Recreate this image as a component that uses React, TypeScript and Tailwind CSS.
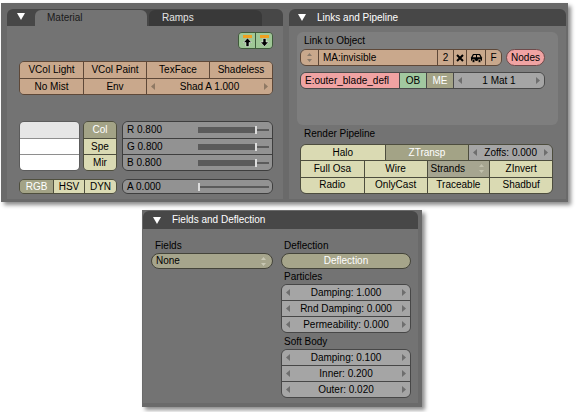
import React from "react";

// Blender 2.4x style button panels: Material, Links and Pipeline, Fields and Deflection

type Tone = "tan" | "cream" | "olive" | "gray" | "pink" | "green" | "menu";

const tones: Record<Tone, string> = {
  tan: "bg-[#c9a88c] text-black",
  cream: "bg-[#dadab3] text-black",
  olive: "bg-[#a3a386] text-white",
  gray: "bg-[#a5a5a5] text-black",
  pink: "bg-[#f0a3a3] text-black",
  green: "bg-[#a2c8a0] text-black",
  menu: "bg-[#a6a590] text-black",
};

function Tri() {
  return (
    <svg width="8" height="7" viewBox="0 0 8 7">
      <path d="M0 0H8L4 7Z" fill="#ffffff" />
    </svg>
  );
}

function Arrow({ dir, color = "#6e6e6e" }: { dir: "l" | "r"; color?: string }) {
  return (
    <svg width="4" height="7" viewBox="0 0 4 7" className="flex-none">
      <path d={dir === "l" ? "M4 0L0 3.5L4 7Z" : "M0 0L4 3.5L0 7Z"} fill={color} />
    </svg>
  );
}

function Stepper({ color = "#8a7a6a" }: { color?: string }) {
  return (
    <svg width="5" height="9" viewBox="0 0 5 9" className="flex-none">
      <path d="M2.5 0L5 3H0Z M0 6H5L2.5 9Z" fill={color} />
    </svg>
  );
}

function Cell({
  tone,
  className = "",
  children,
}: {
  tone: Tone;
  className?: string;
  children?: React.ReactNode;
}) {
  return (
    <div className={`flex items-center justify-center h-full whitespace-nowrap ${tones[tone]} ${className}`}>
      {children}
    </div>
  );
}

function Num({
  tone,
  label,
  className = "",
  arrow,
}: {
  tone: Tone;
  label: string;
  className?: string;
  arrow?: string;
}) {
  return (
    <div className={`flex items-center h-full px-[4px] whitespace-nowrap ${tones[tone]} ${className}`}>
      <Arrow dir="l" color={arrow} />
      <span className="flex-1 text-center">{label}</span>
      <Arrow dir="r" color={arrow} />
    </div>
  );
}

function Slider({ label, fill, className = "" }: { label: string; fill: number; className?: string }) {
  return (
    <div className={`flex items-center h-full bg-[#929292] ${className}`}>
      <span className="w-[75px] flex-none pl-[4px] text-black">{label}</span>
      <div className="w-[71px] flex items-center h-full">
        <div className="h-[6px] bg-[#5b5b5b]" style={{ width: fill }} />
        <div className="w-[2px] h-[8px] bg-[#dcdcdc]" />
        <div className="flex-1 h-[2px] bg-[#5b5b5b]" />
      </div>
    </div>
  );
}

function MoveIcon({ up }: { up: boolean }) {
  return (
    <svg width="9" height="12" viewBox="0 0 9 12">
      <rect x="0" y="0" width="9" height="3" fill="#f0a020" />
      <path
        d={up ? "M4.5 3L8.5 7.5H6V11.5H3V7.5H0.5Z" : "M3 3.5H6V7H8.5L4.5 11.5L0.5 7H3Z"}
        fill="#000000"
        stroke="#ffffff"
        strokeWidth="0.5"
      />
    </svg>
  );
}

function CarIcon() {
  return (
    <svg width="13" height="10" viewBox="0 0 13 10">
      <path d="M1 4.5L3 1H10L12 4.5V8H1Z" fill="#000000" />
      <path d="M3.8 2H6V4.2H2.6Z M7 2H9.2L10.4 4.2H7Z" fill="#c9a88c" />
      <circle cx="3.5" cy="8" r="1.6" fill="#000000" stroke="#c9a88c" strokeWidth="0.8" />
      <circle cx="9.5" cy="8" r="1.6" fill="#000000" stroke="#c9a88c" strokeWidth="0.8" />
    </svg>
  );
}

function Label({ children, className = "" }: { children: React.ReactNode; className?: string }) {
  return <div className={`h-[12px] leading-[12px] text-black whitespace-nowrap ${className}`}>{children}</div>;
}

export default function App() {
  return (
    <div className="w-[581px] h-[412px] bg-white overflow-hidden font-['Liberation_Sans',Arial,sans-serif] text-[10px] leading-none">
      {/* top window */}
      <div className="ml-[1px] mt-[3px] w-[567px] h-[199px] bg-[#6a6a6a] flex gap-[6px] pl-[6px] pt-[6px] shadow-[3px_3px_4px_rgba(0,0,0,0.45)]">
        {/* Material panel */}
        <div className="w-[276px] h-[190px] flex flex-col">
          <div className="h-[17px] bg-[#474747] rounded-t-[6px] flex items-end">
            <div className="self-center ml-[10px] mb-[2px] flex">
              <Tri />
            </div>
            <div className="ml-[10px] w-[112px] h-[16px] rounded-t-[6px] bg-[#737373] pl-[12px] flex items-center text-[#1a1a1a]">
              Material
            </div>
            <div className="ml-[2px] w-[113px] h-[16px] rounded-t-[6px] bg-[#393939] pl-[13px] flex items-center text-[#e4e4e4]">
              Ramps
            </div>
          </div>
          <div className="flex-1 bg-[#737373] flex flex-col pl-[12px] pr-[10px] pt-[6px]">
            <div className="self-end w-[35px] h-[17px] flex rounded-[4px] border border-[#3f5a3a] overflow-hidden">
              <div className="flex-1 bg-[#9fc796] flex items-center justify-center">
                <MoveIcon up />
              </div>
              <div className="flex-1 bg-[#9fc796] border-l border-[#3f5a3a] flex items-center justify-center">
                <MoveIcon up={false} />
              </div>
            </div>

            <div className="mt-[12px] w-[254px] h-[34px] rounded-[5px] border border-[#5e4838] overflow-hidden grid grid-cols-4 grid-rows-2">
              <Cell tone="tan">VCol Light</Cell>
              <Cell tone="tan" className="border-l border-[#5e4838]">VCol Paint</Cell>
              <Cell tone="tan" className="border-l border-[#5e4838]">TexFace</Cell>
              <Cell tone="tan" className="border-l border-[#5e4838]">Shadeless</Cell>
              <Cell tone="tan" className="border-t border-[#5e4838]">No Mist</Cell>
              <Cell tone="tan" className="border-t border-l border-[#5e4838]">Env</Cell>
              <Num tone="tan" label="Shad A 1.000" arrow="#8f7964" className="col-span-2 border-t border-l border-[#5e4838]" />
            </div>

            <div className="mt-[26px] h-[50px] flex">
              <div className="w-[61px] h-full rounded-[5px] border border-[#5c5c5c] overflow-hidden grid grid-rows-3">
                <div className="bg-[#e6e6e6]" />
                <div className="bg-white border-t border-[#8e8e8e]" />
                <div className="bg-white border-t border-[#8e8e8e]" />
              </div>
              <div className="ml-[3px] w-[34px] h-full rounded-[5px] border border-[#4f4f3e] overflow-hidden grid grid-rows-3">
                <Cell tone="olive">Col</Cell>
                <Cell tone="cream" className="border-t border-[#4f4f3e]">Spe</Cell>
                <Cell tone="cream" className="border-t border-[#4f4f3e]">Mir</Cell>
              </div>
              <div className="ml-[5px] w-[151px] h-full rounded-[6px] border border-[#3e3e3e] overflow-hidden grid grid-rows-3">
                <Slider label="R 0.800" fill={57} />
                <Slider label="G 0.800" fill={57} className="border-t border-[#3e3e3e]" />
                <Slider label="B 0.800" fill={57} className="border-t border-[#3e3e3e]" />
              </div>
            </div>

            <div className="mt-[8px] h-[15px] flex">
              <div className="w-[98px] h-full rounded-[5px] border border-[#4f4f3e] overflow-hidden flex">
                <Cell tone="olive" className="w-[33px]">RGB</Cell>
                <Cell tone="cream" className="w-[31px] border-l border-[#4f4f3e]">HSV</Cell>
                <Cell tone="cream" className="flex-1 border-l border-[#4f4f3e]">DYN</Cell>
              </div>
              <div className="ml-[5px] w-[151px] h-full rounded-[6px] border border-[#3e3e3e] overflow-hidden">
                <Slider label="A 0.000" fill={0} />
              </div>
            </div>
          </div>
        </div>

        {/* Links and Pipeline panel */}
        <div className="w-[277px] h-[190px] flex flex-col">
          <div className="h-[17px] bg-[#474747] rounded-t-[6px] flex items-center pl-[9px]">
            <Tri />
            <span className="ml-[11px] text-white">Links and Pipeline</span>
          </div>
          <div className="flex-1 bg-[#737373] flex flex-col pt-[6px]">
            <div className="ml-[8px] w-[261px] h-[93px] rounded-[6px] bg-[#7e7e7e] pt-[3px] pl-[3px] flex flex-col">
              <Label className="pl-[4px]">Link to Object</Label>
              <div className="mt-[2px] h-[17px] flex gap-[4px]">
                <div className="w-[202px] h-full rounded-[6px] border border-[#5e4838] overflow-hidden flex">
                  <Cell tone="tan" className="w-[17px]">
                    <Stepper />
                  </Cell>
                  <Cell tone="tan" className="w-[119px] border-l border-[#5e4838] !justify-start pl-[4px]">
                    MA:invisible
                  </Cell>
                  <Cell tone="tan" className="w-[16px] border-l border-[#5e4838]">2</Cell>
                  <Cell tone="tan" className="w-[13px] border-l border-[#5e4838]">
                    <svg width="8" height="8" viewBox="0 0 8 8">
                      <path d="M1 1L7 7M7 1L1 7" stroke="#000000" strokeWidth="2" />
                    </svg>
                  </Cell>
                  <Cell tone="tan" className="w-[19px] border-l border-[#5e4838]">
                    <CarIcon />
                  </Cell>
                  <Cell tone="tan" className="flex-1 border-l border-[#5e4838]">F</Cell>
                </div>
                <div className="w-[39px] h-full rounded-full border border-[#6e4a4a] bg-[#f0a3a3] flex items-center justify-center text-black">
                  Nodes
                </div>
              </div>
              <div className="mt-[6px] w-[245px] h-[17px] rounded-[6px] border border-[#4a4a4a] overflow-hidden flex">
                <Cell tone="pink" className="w-[98px] !justify-start pl-[4px]">E:outer_blade_defl</Cell>
                <Cell tone="green" className="w-[27px] border-l border-[#4a4a4a]">OB</Cell>
                <Cell tone="olive" className="w-[27px] border-l border-[#4a4a4a]">ME</Cell>
                <Num tone="gray" label="1 Mat 1" className="flex-1 border-l border-[#4a4a4a]" />
              </div>
            </div>

            <Label className="mt-[3px] pl-[15px]">Render Pipeline</Label>
            <div className="mt-[4px] ml-[11px] w-[253px] h-[50px] rounded-[6px] border border-[#4d4d3e] overflow-hidden flex flex-col">
              <div className="flex-1 grid grid-cols-3">
                <Cell tone="cream">Halo</Cell>
                <Cell tone="olive" className="border-l border-[#4d4d3e]">ZTransp</Cell>
                <Num tone="gray" label="Zoffs: 0.000" className="border-l border-[#4d4d3e]" />
              </div>
              <div className="flex-1 grid grid-cols-4 border-t border-[#4d4d3e]">
                <Cell tone="cream">Full Osa</Cell>
                <Cell tone="cream" className="border-l border-[#4d4d3e]">Wire</Cell>
                <div className="flex items-center justify-between h-full bg-[#a6a590] pl-[3px] pr-[5px] border-l border-[#4d4d3e] text-black">
                  <span>Strands</span>
                  <Stepper color="#c2c1ad" />
                </div>
                <Cell tone="cream" className="border-l border-[#4d4d3e]">ZInvert</Cell>
              </div>
              <div className="flex-1 grid grid-cols-4 border-t border-[#4d4d3e]">
                <Cell tone="cream">Radio</Cell>
                <Cell tone="cream" className="border-l border-[#4d4d3e]">OnlyCast</Cell>
                <Cell tone="cream" className="border-l border-[#4d4d3e]">Traceable</Cell>
                <Cell tone="cream" className="border-l border-[#4d4d3e]">Shadbuf</Cell>
              </div>
            </div>
          </div>
        </div>
      </div>

      {/* Fields and Deflection window */}
      <div className="ml-[142px] mt-[8px] w-[280px] h-[197px] bg-[#6a6a6a] pl-[1px] pt-[1px] shadow-[3px_3px_4px_rgba(0,0,0,0.45)]">
        <div className="w-[275px] h-[192px] flex flex-col">
          <div className="h-[18px] bg-[#474747] rounded-t-[6px] flex items-center pl-[10px]">
            <Tri />
            <span className="ml-[11px] text-white">Fields and Deflection</span>
          </div>
          <div className="flex-1 bg-[#737373] flex gap-[8px] pl-[8px] pt-[11px]">
            <div className="w-[122px] flex flex-col">
              <Label className="pl-[4px]">Fields</Label>
              <div className="mt-[1px] h-[16px] rounded-full border border-[#44443a] bg-[#a6a58c] flex items-center justify-between pl-[4px] pr-[6px] text-black">
                <span>None</span>
                <Stepper color="#c9c8b4" />
              </div>
            </div>
            <div className="w-[130px] flex flex-col">
              <Label className="pl-[3px]">Deflection</Label>
              <div className="mt-[1px] h-[16px] rounded-full border border-[#44443a] bg-[#a6a58a] flex items-center justify-center text-white">
                Deflection
              </div>
              <Label className="mt-[2px] pl-[3px]">Particles</Label>
              <div className="mt-[1px] h-[49px] rounded-[6px] border border-[#474747] overflow-hidden flex flex-col">
                <Num tone="gray" label="Damping: 1.000" className="flex-1" />
                <Num tone="gray" label="Rnd Damping: 0.000" className="flex-1 border-t border-[#474747]" />
                <Num tone="gray" label="Permeability: 0.000" className="flex-1 border-t border-[#474747]" />
              </div>
              <Label className="mt-[3px] pl-[3px]">Soft Body</Label>
              <div className="mt-[1px] h-[49px] rounded-[6px] border border-[#474747] overflow-hidden flex flex-col">
                <Num tone="gray" label="Damping: 0.100" className="flex-1" />
                <Num tone="gray" label="Inner: 0.200" className="flex-1 border-t border-[#474747]" />
                <Num tone="gray" label="Outer: 0.020" className="flex-1 border-t border-[#474747]" />
              </div>
            </div>
          </div>
        </div>
      </div>
    </div>
  );
}
